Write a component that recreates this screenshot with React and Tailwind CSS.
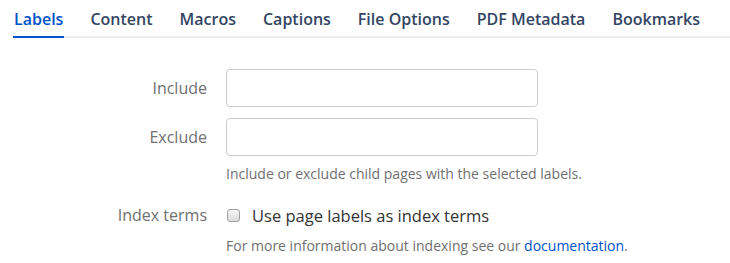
import React from "react";

const tabs = ["Labels", "Content", "Macros", "Captions", "File Options", "PDF Metadata", "Bookmarks"];

export default function App() {
  return (
    <div className="w-[730px] h-[263px] bg-white overflow-hidden" style={{ fontFamily: '"Open Sans", "Noto Sans", sans-serif' }}>
      <div className="ml-[13px] flex gap-[25px] border-b-2 border-[#ebecf0] h-[38px]">
        {tabs.map((t, i) => (
          <div
            key={t}
            className={
              "pt-[9px] h-[38px] -mb-[2px] border-b-2 text-[16px] font-semibold leading-[21px] " +
              (i === 0 ? "border-[#0052cc] text-[#0052cc]" : "border-transparent text-[#344563]")
            }
          >
            <span className="px-[1px]">{t}</span>
          </div>
        ))}
      </div>
      <div className="grid grid-cols-[207px_312px] gap-x-[19px] mt-[31px]">
        <div className="text-right text-[#707070] text-[16px] h-[38px] flex items-center justify-end">Include</div>
        <input className="h-[38px] border border-[#ccc] rounded-[4px] px-2 outline-none" />
        <div className="text-right text-[#707070] text-[16px] h-[38px] flex items-center justify-end mt-[11px]">Exclude</div>
        <input className="h-[38px] border border-[#ccc] rounded-[4px] px-2 outline-none mt-[11px]" />
        <div></div>
        <div className="text-[14px] text-[#707070] mt-[7px] whitespace-nowrap">Include or exclude child pages with the selected labels.</div>
        <div className="text-right text-[#707070] text-[16px] mt-[21px] leading-[21px]">Index terms</div>
        <label className="flex items-center mt-[21px] whitespace-nowrap leading-[21px]">
          <span className="w-[13px] h-[13px] border border-[#a0a0a0] rounded-[3px] bg-gradient-to-b from-[#f4f4f4] to-[#dcdcdc] mr-[12px] ml-[1px]"></span>
          <span className="text-[16.5px] text-[#333]">Use page labels as index terms</span>
        </label>
        <div></div>
        <div className="text-[14px] text-[#707070] mt-[9px] whitespace-nowrap">
          For more information about indexing see our <a className="text-[#0052cc]">documentation</a>.
        </div>
      </div>
    </div>
  );
}
